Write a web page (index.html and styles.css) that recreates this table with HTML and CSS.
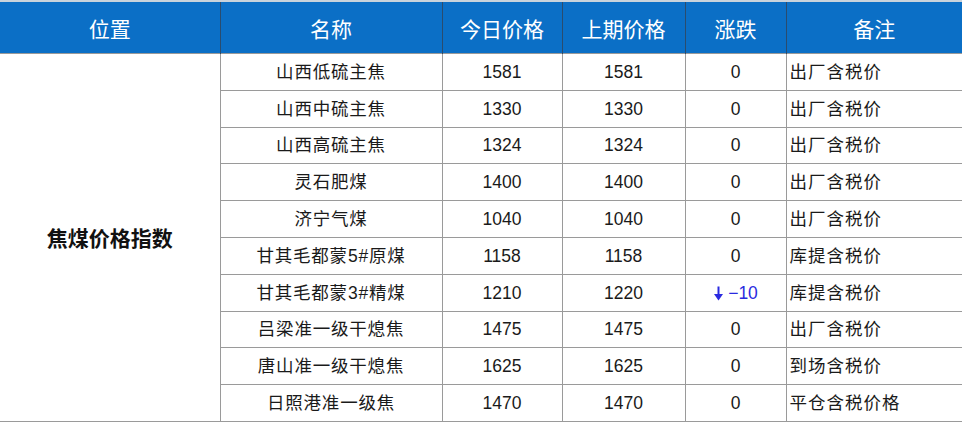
FILE: index.html
```html
<!DOCTYPE html>
<html lang="zh">
<head>
<meta charset="utf-8">
<link rel="stylesheet" href="styles.css">
</head>
<body>
<table class="price-table">
  <colgroup>
    <col class="c-pos"><col class="c-name"><col class="c-today"><col class="c-prev"><col class="c-chg"><col class="c-note">
  </colgroup>
  <thead>
    <tr><th class="first">位置</th><th>名称</th><th>今日价格</th><th>上期价格</th><th>涨跌</th><th>备注</th></tr>
  </thead>
  <tbody>
    <tr><td class="pos" rowspan="10">焦煤价格指数</td><td class="name">山西低硫主焦</td><td>1581</td><td>1581</td><td>0</td><td class="note">出厂含税价</td></tr>
    <tr><td class="name">山西中硫主焦</td><td>1330</td><td>1330</td><td>0</td><td class="note">出厂含税价</td></tr>
    <tr><td class="name">山西高硫主焦</td><td>1324</td><td>1324</td><td>0</td><td class="note">出厂含税价</td></tr>
    <tr><td class="name">灵石肥煤</td><td>1400</td><td>1400</td><td>0</td><td class="note">出厂含税价</td></tr>
    <tr><td class="name">济宁气煤</td><td>1040</td><td>1040</td><td>0</td><td class="note">出厂含税价</td></tr>
    <tr><td class="name">甘其毛都蒙5#原煤</td><td>1158</td><td>1158</td><td>0</td><td class="note">库提含税价</td></tr>
    <tr><td class="name">甘其毛都蒙3#精煤</td><td>1210</td><td>1220</td><td class="down"><svg class="arrow" width="11" height="15" viewBox="0 0 11 15"><path d="M5.5 0.5 V9" stroke="#2a2ae0" stroke-width="2" fill="none"/><path d="M1 8 L10 8 L5.5 14.5 Z" fill="#2a2ae0"/></svg>−10</td><td class="note">库提含税价</td></tr>
    <tr><td class="name">吕梁准一级干熄焦</td><td>1475</td><td>1475</td><td>0</td><td class="note">出厂含税价</td></tr>
    <tr><td class="name">唐山准一级干熄焦</td><td>1625</td><td>1625</td><td>0</td><td class="note">到场含税价</td></tr>
    <tr><td class="name">日照港准一级焦</td><td>1470</td><td>1470</td><td>0</td><td class="note">平仓含税价格</td></tr>
  </tbody>
</table>
</body>
</html>
```
FILE: styles.css
```css
html, body {
  margin: 0;
  padding: 0;
  background: #ffffff;
}
body {
  border-top: 2px solid #c9d3dc;
}
.price-table {
  width: 962px;
  table-layout: fixed;
  border-collapse: collapse;
  font-family: "Liberation Sans", "Noto Sans CJK SC", sans-serif;
  color: #1a1a1a;
}
.c-pos { width: 220px; }
.c-name { width: 222px; }
.c-today { width: 120px; }
.c-prev { width: 123px; }
.c-chg { width: 101px; }
.c-note { width: 176px; }

.price-table th {
  background: #0b6fc6;
  color: #ffffff;
  font-family: "Noto Sans CJK SC", sans-serif;
  font-weight: 400;
  font-size: 21px;
  height: 51px;
  padding: 0;
  border-left: 1px solid #2a4c6e;
  text-align: center;
  vertical-align: middle;
}
.price-table th.first { border-left: none; }
.price-table td {
  height: 35.8px;
  padding: 0;
  font-size: 17.5px;
  text-align: center;
  vertical-align: middle;
  border: 1px solid #9a9a9a;
  line-height: 20px;
}
.price-table td.name {
  letter-spacing: 0.8px;
}
.price-table td.pos {
  border-left: none;
  font-family: "Noto Sans CJK SC", sans-serif;
  font-weight: 700;
  font-size: 21px;
  color: #111111;
}
.price-table td.note {
  text-align: left;
  padding-left: 3px;
  border-right: none;
  letter-spacing: 1px;
}
.price-table td.down {
  color: #2a2ae0;
}
.arrow {
  vertical-align: -2px;
  margin-right: 4px;
}
```
